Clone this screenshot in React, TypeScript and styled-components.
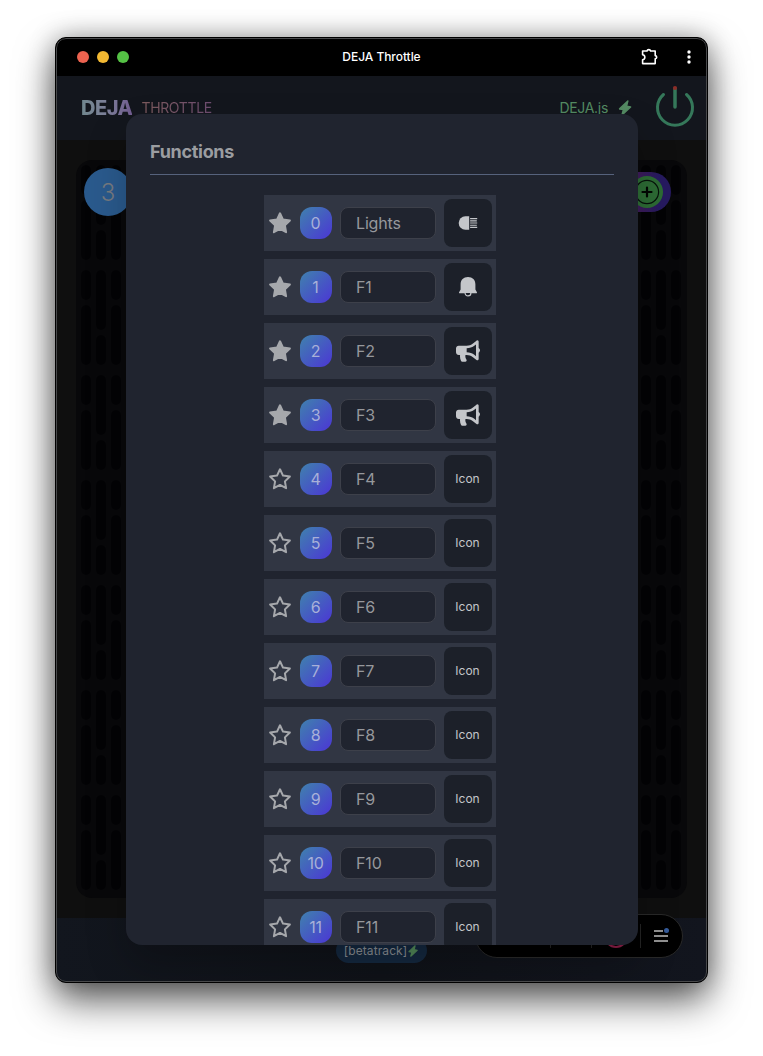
import React from "react";
import styled, { createGlobalStyle } from "styled-components";
import { FaBullhorn } from "react-icons/fa";

const Global = createGlobalStyle`
  * { box-sizing: border-box; }
  body { margin: 0; background: #fff; font-family: Inter, "Liberation Sans", sans-serif; }
`;

const Desktop = styled.div`
  width: 763px;
  height: 1056px;
  padding: 37px 55px;
  overflow: hidden;
`;

const Window = styled.div`
  position: relative;
  display: flex;
  flex-direction: column;
  width: 653px;
  height: 946px;
  border: 1px solid #000;
  border-radius: 11px;
  background: #0f0f0f;
  box-shadow: 0 18px 38px rgba(0, 0, 0, 0.62), 0 0 26px rgba(0, 0, 0, 0.3);
  overflow: hidden;
  &::after {
    content: "";
    position: absolute;
    inset: 0;
    border: 1px solid #48494b;
    border-radius: 10px;
    pointer-events: none;
  }
`;

const TitleBar = styled.div`
  flex: none;
  display: grid;
  grid-template-columns: 1fr auto 1fr;
  align-items: center;
  height: 38px;
  padding: 0 16px 0 21px;
  background: #000;
`;

const Lights = styled.div`
  display: flex;
  gap: 8px;
`;

const Light = styled.span<{ $color: string }>`
  width: 12px;
  height: 12px;
  border-radius: 50%;
  background: ${(p) => p.$color};
`;

const WindowTitle = styled.span`
  color: #fff;
  font-size: 12px;
  font-weight: 500;
  letter-spacing: -0.05px;
  padding: 0 5px 2px 0;
`;

const TitleActions = styled.div`
  display: flex;
  justify-content: flex-end;
  align-items: center;
  gap: 28px;
`;

const Header = styled.header`
  flex: none;
  display: flex;
  align-items: center;
  justify-content: space-between;
  height: 64px;
  padding: 0 12px 0 25px;
  background: #13161d;
`;

const Brand = styled.div`
  display: flex;
  align-items: center;
  gap: 9px;
`;

const BrandName = styled.span`
  font-size: 20px;
  font-weight: 800;
  letter-spacing: -0.5px;
  color: transparent;
  background: linear-gradient(90deg, #71878e, #7c7f98 50%, #725d91);
  background-clip: text;
`;

const BrandSub = styled.span`
  padding-bottom: 1px;
  font-size: 14px;
  font-weight: 400;
  letter-spacing: -0.35px;
  color: transparent;
  background: linear-gradient(90deg, #7c5a5c, #6e4d71);
  background-clip: text;
`;

const Status = styled.div`
  display: flex;
  align-items: center;
  color: #548b63;
  font-size: 14px;
  letter-spacing: -0.3px;
`;

const StatusText = styled.span`
  padding-bottom: 1px;
`;

const StatusIcon = styled.span`
  display: flex;
  margin: 0 22px 1px 9px;
`;

const Track = styled.main`
  flex: 1;
  padding: 20px;
`;

const Deck = styled.div`
  position: relative;
  display: flex;
  justify-content: space-between;
  width: 611px;
  height: 738px;
  border-radius: 16px;
  background: #08080a;
  overflow: hidden;
`;

const LocoBadge = styled.div`
  position: absolute;
  left: 8px;
  top: 8px;
  width: 48px;
  height: 48px;
  border-radius: 50%;
  background: #2a5a8d;
  color: #777b81;
  font-size: 24px;
  font-weight: 300;
  line-height: 49px;
  text-align: center;
`;

const AddPill = styled.div`
  position: absolute;
  right: 16px;
  top: 12px;
  display: flex;
  align-items: center;
  justify-content: flex-end;
  width: 80px;
  height: 40px;
  padding-right: 8px;
  border-radius: 20px;
  background: linear-gradient(90deg, #461c58 50%, #261a60 85%);
`;

const Footer = styled.footer`
  flex: none;
  display: flex;
  justify-content: center;
  height: 64px;
  padding-top: 20px;
  background: linear-gradient(90deg, #12161e, #0f1218 50%, #12151e);
`;

const TrackChip = styled.div`
  display: flex;
  align-items: center;
  justify-content: center;
  width: 91px;
  height: 25px;
  border-radius: 13px;
  background: #14283f;
  color: #898d92;
  font-size: 12px;
  letter-spacing: 0.1px;
  svg { color: #528958; }
`;

const MenuPill = styled.div`
  position: absolute;
  right: 24px;
  bottom: 24px;
  display: flex;
  align-items: center;
  justify-content: flex-end;
  width: 208px;
  height: 44px;
  padding-right: 12px;
  border: 1px solid #292929;
  border-radius: 22px;
  background: #000;
`;

const Divider = styled.span<{ $gap: number }>`
  width: 1px;
  height: 24px;
  margin-right: ${(p) => p.$gap}px;
  background: #242424;
`;

const Ring = styled.span`
  width: 24px;
  height: 24px;
  margin-right: 12px;
  border: 2px solid #8c1f48;
  border-radius: 50%;
`;

const Modal = styled.section`
  position: absolute;
  left: 70px;
  top: 76px;
  display: flex;
  flex-direction: column;
  width: 512px;
  height: 831px;
  padding: 24px 24px 0;
  border-radius: 16px;
  background: #20242f;
  box-shadow: 0 20px 40px rgba(0, 0, 0, 0.22);
  overflow: hidden;
`;

const Heading = styled.h1`
  flex: none;
  height: 37px;
  margin: 0 0 20px;
  border-bottom: 1px solid #56627c;
  color: #9b9da1;
  font-size: 18px;
  font-weight: 700;
  line-height: 28px;
  letter-spacing: -0.3px;
`;

const List = styled.div`
  display: flex;
  flex-direction: column;
  align-items: center;
  gap: 8px;
  padding-right: 4px;
`;

const Row = styled.div`
  flex: none;
  display: flex;
  align-items: center;
  gap: 8px;
  width: 232px;
  height: 56px;
  padding: 0 4px;
  background: #313643;
`;

const StarToggle = styled.span`
  display: flex;
  width: 24px;
  color: #a6a8ac;
`;

const Num = styled.span`
  width: 32px;
  height: 32px;
  padding-right: 1px;
  border-radius: 12px;
  background: linear-gradient(135deg, #3f82ad, #4b36d5);
  color: #a8b0d8;
  font-size: 16px;
  letter-spacing: -0.2px;
  line-height: 33px;
  text-align: center;
`;

const Field = styled.div`
  width: 96px;
  height: 32px;
  padding-left: 15px;
  border: 1px solid #3d404a;
  border-radius: 8px;
  background: #20242f;
  color: #96989c;
  font-size: 16px;
  letter-spacing: -0.15px;
  line-height: 31px;
`;

const IconButton = styled.div`
  display: flex;
  align-items: center;
  justify-content: center;
  width: 48px;
  height: 48px;
  border-radius: 8px;
  background: #1c2029;
  color: #c4c6ca;
  font-size: 12px;
`;

const IconLabel = styled.span`
  padding: 0 1px 2px 0;
`;

const Star = ({ filled }: { filled: boolean }) => (
  <svg width="24" height="24" viewBox="0 0 24 24" fill={filled ? "currentColor" : "none"}>
    <path
      d="M12 2.3 15 8.6 21.9 9.5 16.9 14.4 18.1 21.2 12 17.9 5.9 21.2 7.1 14.4 2.1 9.5 9 8.6Z"
      stroke="currentColor"
      strokeWidth="2"
      strokeLinejoin="round"
    />
  </svg>
);

const Bolt = ({ size }: { size: number }) => (
  <svg width={size} height={size} viewBox="0 0 16 16" fill="currentColor">
    <path
      d="M10.8 1 2.6 8.9 6.4 9.6 5 15 13.6 7 9.6 6.2Z"
      stroke="currentColor"
      strokeWidth="1.5"
      strokeLinejoin="round"
    />
  </svg>
);

const Headlight = () => (
  <svg width="20" height="16" viewBox="0 0 20 16" fill="currentColor">
    <path d="M11.2 1.3V14.7H7.4A6.7 6.7 0 0 1 7.4 1.3Z" />
    <path d="M12.1 3.6H19.2M12.1 5.8H18.8M12.1 8H19.2M12.1 10.2H18.8M12.1 12.4H19.2" stroke="currentColor" strokeWidth="1.15" />
  </svg>
);

const Bell = () => (
  <svg width="24" height="24" viewBox="0 0 24 24" fill="currentColor">
    <path d="M12 2C7.5 2 4.6 4.9 4.6 9.2V14.4L3.1 17.2C2.8 17.9 3.1 18.3 3.8 18.3H20.2C20.9 18.3 21.2 17.9 20.9 17.2L19.4 14.4V9.2C19.4 4.9 16.5 2 12 2Z" />
    <path d="M9.1 18a2.9 2.9 0 0 0 5.8 0" fill="#1c2029" stroke="currentColor" strokeWidth="1.2" />
  </svg>
);

const PowerSvg = styled.svg`
  margin-bottom: 4px;
`;

const Power = () => (
  <PowerSvg width="40" height="42" viewBox="0 0 40 42" fill="none" strokeLinecap="round">
    <path d="M8.5 9.5A17.5 17.5 0 1 0 31.5 9.5" stroke="#35785a" strokeWidth="3" />
    <path d="M20 4V22" stroke="#35785a" strokeWidth="3.5" />
    <circle cx="20" cy="3" r="2.1" fill="#8c2d28" />
  </PowerSvg>
);

const Puzzle = () => (
  <svg width="18" height="18" viewBox="0 0 18 18" fill="none" stroke="#fff" strokeWidth="1.6">
    <path
      d="M1.6 3H6C6.4 1.1 9.2 1.1 9.6 3H14.2V7.6C16.2 8 16.2 10.4 14.2 10.8V15.6H1.6V11.8C4.6 11.4 4.6 7.2 1.6 6.8Z"
      strokeLinejoin="round"
    />
  </svg>
);

const Dots = () => (
  <svg width="4" height="14" viewBox="0 0 4 14" fill="#fff">
    <circle cx="2" cy="2" r="1.7" />
    <circle cx="2" cy="7" r="1.7" />
    <circle cx="2" cy="12" r="1.7" />
  </svg>
);

const Plus = () => (
  <svg width="32" height="32" viewBox="0 0 32 32" fill="none">
    <circle cx="16" cy="16" r="16" fill="#2d6c35" />
    <circle cx="16" cy="16" r="11.6" stroke="#06110a" strokeWidth="1.2" />
    <path d="M16 11.5v9M11.5 16h9" stroke="#020703" strokeWidth="2.2" strokeLinecap="round" />
  </svg>
);

const Menu = () => (
  <svg width="16" height="16" viewBox="0 0 16 16" fill="none">
    <path d="M0 3h9M0 8h14M0 13h14" stroke="#929292" strokeWidth="2" />
    <circle cx="12.5" cy="2.5" r="2.5" fill="#355c9b" />
  </svg>
);

const Grille = ({ id, offset }: { id: string; offset: number }) => (
  <svg width="60" height="738">
    <defs>
      <pattern id={id} x={offset} y="5" width="30" height="105" patternUnits="userSpaceOnUse">
        <g fill="#030305">
          <rect x="0" y="0" width="10" height="30" rx="5" />
          <rect x="0" y="35" width="10" height="60" rx="5" />
          <rect x="15" y="0" width="10" height="60" rx="5" />
          <rect x="15" y="65" width="10" height="30" rx="5" />
        </g>
      </pattern>
    </defs>
    <rect x="4" width="52" height="730" fill={`url(#${id})`} />
  </svg>
);

const functions = ["Lights", ...Array.from({ length: 11 }, (_, i) => `F${i + 1}`)];

const icons: Record<number, React.ReactNode> = {
  0: <Headlight />,
  1: <Bell />,
  2: <FaBullhorn size={24} />,
  3: <FaBullhorn size={24} />,
};

export default function App() {
  return (
    <Desktop>
      <Global />
      <Window>
        <TitleBar>
          <Lights>
            <Light $color="#ec6350" />
            <Light $color="#f3b932" />
            <Light $color="#55c245" />
          </Lights>
          <WindowTitle>DEJA Throttle</WindowTitle>
          <TitleActions>
            <Puzzle />
            <Dots />
          </TitleActions>
        </TitleBar>
        <Header>
          <Brand>
            <BrandName>DEJA</BrandName>
            <BrandSub>THROTTLE</BrandSub>
          </Brand>
          <Status>
            <StatusText>DEJA.js</StatusText>
            <StatusIcon><Bolt size={16} /></StatusIcon>
            <Power />
          </Status>
        </Header>
        <Track>
          <Deck>
            <Grille id="grille-left" offset={5} />
            <Grille id="grille-right" offset={14} />
            <LocoBadge>3</LocoBadge>
            <AddPill><Plus /></AddPill>
          </Deck>
        </Track>
        <Footer>
          <TrackChip>[betatrack]<Bolt size={12} /></TrackChip>
        </Footer>
        <MenuPill>
          <Divider $gap={40} />
          <Divider $gap={12} />
          <Ring />
          <Divider $gap={13} />
          <Menu />
        </MenuPill>
        <Modal>
          <Heading>Functions</Heading>
          <List>
            {functions.map((name, i) => (
              <Row key={name}>
                <StarToggle><Star filled={i < 4} /></StarToggle>
                <Num>{i}</Num>
                <Field>{name}</Field>
                <IconButton>{icons[i] ?? <IconLabel>Icon</IconLabel>}</IconButton>
              </Row>
            ))}
          </List>
        </Modal>
      </Window>
    </Desktop>
  );
}
